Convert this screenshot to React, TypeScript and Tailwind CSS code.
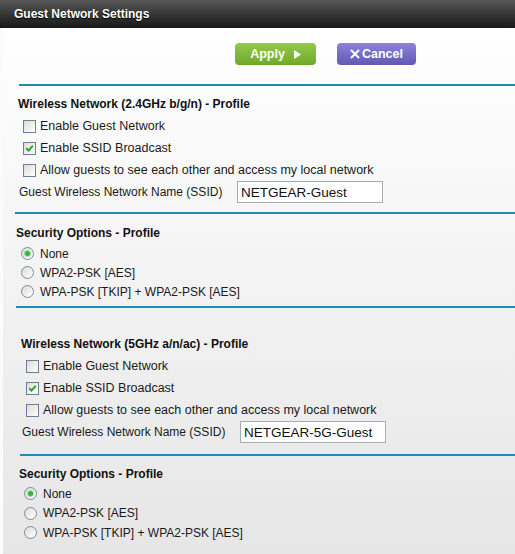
import React from 'react';

// Casillas estilo Windows XP
function Checkbox({ checked }: { checked?: boolean }) {
  return (
    <span className="relative inline-block w-[13px] h-[13px] shrink-0 border border-[#6b7f96] bg-gradient-to-br from-[#dcdcd7] to-white">
      {checked && (
        <svg viewBox="0 0 11 11" className="absolute inset-0 w-[11px] h-[11px]">
          <path d="M2.2 5.2 L4.4 7.6 L8.8 2.8" fill="none" stroke="#21a121" strokeWidth="1.8" />
        </svg>
      )}
    </span>
  );
}

function Radio({ checked }: { checked?: boolean }) {
  return (
    <span className="relative inline-flex items-center justify-center w-[13px] h-[13px] shrink-0 rounded-full border border-[#7f8b99] bg-gradient-to-br from-[#dcdcd7] to-white">
      {checked && <span className="w-[5px] h-[5px] rounded-full bg-[#3cb43c] shadow-[0_0_1px_1px_#9fe09f]" />}
    </span>
  );
}

function CheckRow({ label, checked, x }: { label: string; checked?: boolean; x: string }) {
  return (
    <div className={`h-[22px] flex items-center gap-[4px] ${x}`}>
      <Checkbox checked={checked} />
      <span className="text-[12.5px] text-[#1a1a1a] leading-none">{label}</span>
    </div>
  );
}

function RadioRow({ label, checked, x }: { label: string; checked?: boolean; x: string }) {
  return (
    <div className={`h-[19px] flex items-center gap-[6px] ${x}`}>
      <Radio checked={checked} />
      <span className="text-[12px] text-[#1a1a1a] leading-none">{label}</span>
    </div>
  );
}

const Line = ({ x }: { x: string }) => <div className={`h-[2px] bg-[#1a8fb0] ${x}`} />;

export default function App() {
  return (
    <div className="w-[515px] h-[554px] overflow-hidden flex flex-col font-['Liberation_Sans',Arial,sans-serif]">
      {/* Header */}
      <div className="h-[28px] shrink-0 flex items-center px-[14px] bg-gradient-to-b from-[#585858] to-[#181818]">
        <span className="text-white font-bold text-[12px] [text-shadow:0_1px_1px_#000]">Guest Network Settings</span>
      </div>

      <div className="flex-1 flex flex-col border-l-[3px] border-[#fbfbfb] bg-gradient-to-b from-white to-[#e6e6e6]">
        {/* Buttons */}
        <div className="flex pt-[15px] pl-[232px] gap-[21px]">
          <button className="w-[81px] h-[22px] rounded-[4px] bg-gradient-to-b from-[#94c949] to-[#70a92a] text-white font-bold text-[12.5px] flex items-center justify-center gap-[9px]">
            Apply
            <svg viewBox="0 0 7 9" className="w-[7px] h-[9px]"><path d="M0 0 L7 4.5 L0 9 Z" fill="white" /></svg>
          </button>
          <button className="w-[79px] h-[22px] rounded-[4px] bg-gradient-to-b from-[#8c83dc] to-[#6358b4] text-white font-bold text-[12.5px] flex items-center justify-center gap-[2px]">
            <svg viewBox="0 0 10 10" className="w-[10px] h-[10px]"><path d="M1 1 L9 9 M9 1 L1 9" stroke="white" strokeWidth="2" /></svg>
            Cancel
          </button>
        </div>

        <div className="mt-[19px]"><Line x="ml-[16px]" /></div>

        {/* 2.4GHz */}
        <div className="mt-[7px] h-[22px] flex items-center pl-[15px] font-bold text-[12px] text-[#111]">Wireless Network (2.4GHz b/g/n) - Profile</div>
        <CheckRow x="pl-[20px]" label="Enable Guest Network" />
        <CheckRow x="pl-[20px]" label="Enable SSID Broadcast" checked />
        <CheckRow x="pl-[20px]" label="Allow guests to see each other and access my local network" />
        <div className="h-[22px] flex items-center pl-[16px]">
          <span className="text-[12px] text-[#1a1a1a] w-[218px]">Guest Wireless Network Name (SSID)</span>
          <input readOnly value="NETGEAR-Guest" className="w-[146px] h-[22px] border border-[#a5acb5] bg-white px-[3px] text-[13.5px] text-[#111] outline-none" />
        </div>

        <div className="mt-[9px]"><Line x="ml-[12px]" /></div>

        <div className="mt-[9px] h-[20px] flex items-center pl-[13px] font-bold text-[12px] text-[#111]">Security Options - Profile</div>
        <div className="mt-[1px] flex flex-col">
          <RadioRow x="pl-[18px]" label="None" checked />
          <RadioRow x="pl-[18px]" label="WPA2-PSK [AES]" />
          <RadioRow x="pl-[18px]" label="WPA-PSK [TKIP] + WPA2-PSK [AES]" />
        </div>

        <div className="mt-[5px]"><Line x="ml-[13px]" /></div>

        {/* 5GHz */}
        <div className="mt-[25px] h-[22px] flex items-center pl-[18px] font-bold text-[12px] text-[#111]">Wireless Network (5GHz a/n/ac) - Profile</div>
        <CheckRow x="pl-[23px]" label="Enable Guest Network" />
        <CheckRow x="pl-[23px]" label="Enable SSID Broadcast" checked />
        <CheckRow x="pl-[23px]" label="Allow guests to see each other and access my local network" />
        <div className="h-[22px] flex items-center pl-[19px]">
          <span className="text-[12px] text-[#1a1a1a] w-[218px]">Guest Wireless Network Name (SSID)</span>
          <input readOnly value="NETGEAR-5G-Guest" className="w-[146px] h-[22px] border border-[#a5acb5] bg-white px-[3px] text-[13.5px] text-[#111] outline-none" />
        </div>

        <div className="mt-[11px]"><Line x="ml-[17px]" /></div>

        <div className="mt-[8px] h-[20px] flex items-center pl-[16px] font-bold text-[12px] text-[#111]">Security Options - Profile</div>
        <div className="flex flex-col">
          <RadioRow x="pl-[21px]" label="None" checked />
          <div className="h-[0.5px]" />
          <RadioRow x="pl-[21px]" label="WPA2-PSK [AES]" />
          <div className="h-[0.5px]" />
          <RadioRow x="pl-[21px]" label="WPA-PSK [TKIP] + WPA2-PSK [AES]" />
        </div>
      </div>
    </div>
  );
}
